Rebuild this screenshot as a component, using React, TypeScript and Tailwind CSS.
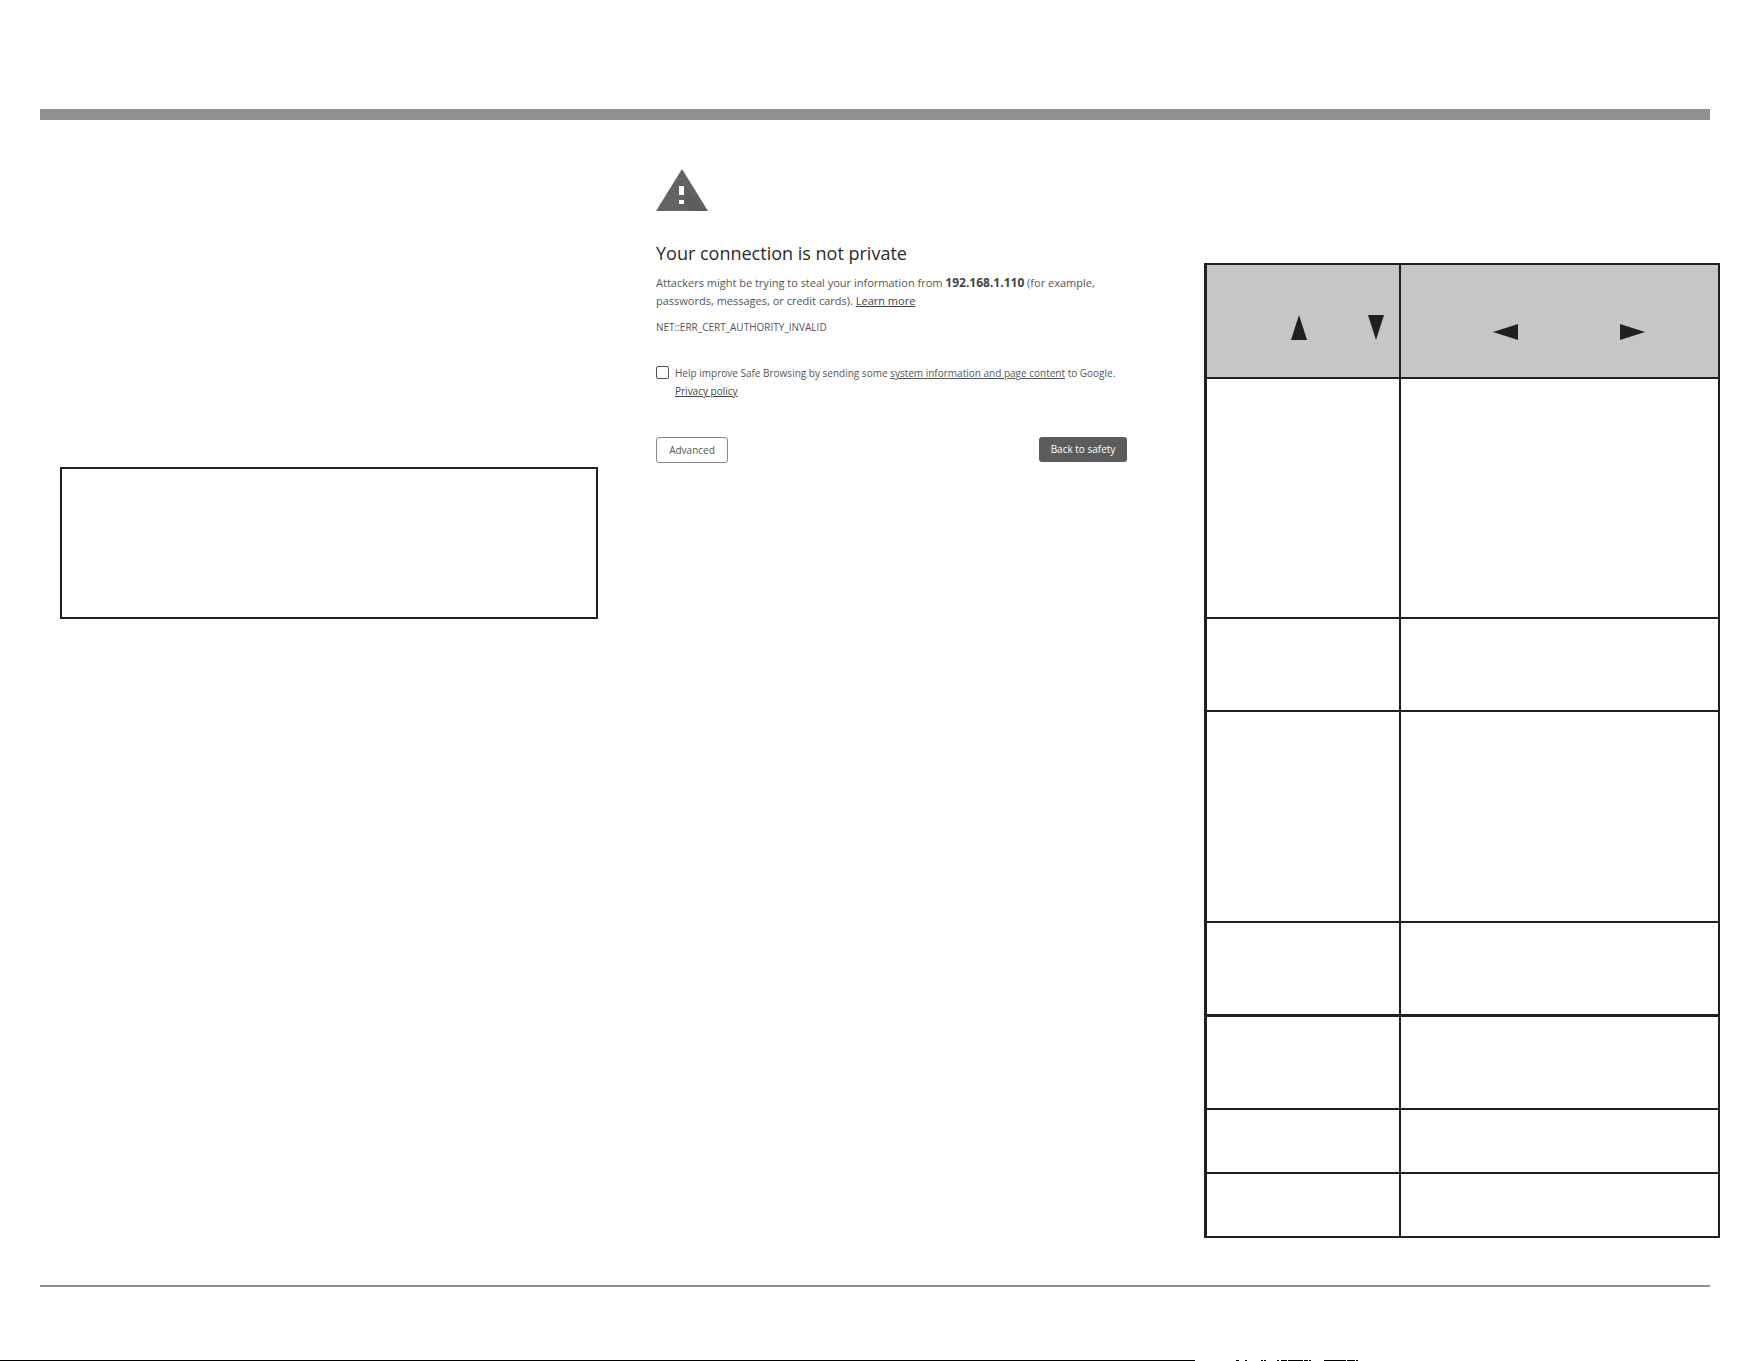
const rows = [
  "h-[240px]",
  "h-[93px]",
  "h-[211px]",
  "h-[94px]",
  "h-[93px]",
  "h-[64px]",
  "h-[64px]",
];

const cutMarks = [
  "ml-[41px] w-[3px]",
  "ml-[6px] w-[2px]",
  "ml-[14px] w-[2px]",
  "ml-px w-[2px]",
  "ml-[11px] w-[2px]",
  "ml-[2px] w-[6px]",
  "ml-px w-[15px]",
  "ml-px w-[4px]",
  "ml-px w-[2px]",
  "ml-[13px] w-[22px]",
  "ml-px w-[8px]",
  "ml-px w-[2px]",
];

function WarningIcon() {
  return (
    <svg width="52" height="42" viewBox="0 0 52 42" aria-hidden="true">
      <path d="M26 0 52 42H0Z" fill="#636363" />
      <path d="M28 18 38 26 48 42H36L23 35V31H28Z" fill="#575757" opacity="0.5" />
      <path d="M23 17h5v9h-5zM23 31h5v4h-5z" fill="#fff" />
    </svg>
  );
}

function Arrow({ w, h, points }: { w: number; h: number; points: string }) {
  return (
    <svg width={w} height={h} viewBox={`0 0 ${w} ${h}`} aria-hidden="true">
      <polygon points={points} fill="#231f20" />
    </svg>
  );
}

function ConnectionWarning() {
  return (
    <section className="mt-[49px] mr-auto ml-[58px] w-[471px] shrink-0 text-[#555]">
      <WarningIcon />
      <h1 className="mt-7 text-lg leading-7 text-[#2b2b2b]">Your connection is not private</h1>
      <p className="mt-[7px] text-[11px] leading-[18px]">
        <span className="block whitespace-nowrap">
          Attackers might be trying to steal your information from{" "}
          <strong className="text-xs leading-none text-[#444]">192.168.1.110</strong> (for example,
        </span>{" "}
        <span className="block whitespace-nowrap">
          passwords, messages, or credit cards).{" "}
          <a href="#" className="text-[#444] underline">
            Learn more
          </a>
        </span>
      </p>
      <p className="mt-2 text-[10px] leading-[18px]">NET::ERR_CERT_AUTHORITY_INVALID</p>
      <div className="mt-7 flex gap-[6px] text-[10px] leading-[18px]">
        <input
          id="reporting"
          type="checkbox"
          className="mt-[2px] size-[13px] shrink-0 appearance-none rounded-[2px] border border-[#555] bg-white checked:bg-[#555]"
        />
        <label htmlFor="reporting">
          <span className="block whitespace-nowrap">
            Help improve Safe Browsing by sending some{" "}
            <a href="#" className="underline">
              system information and page content
            </a>{" "}
            to Google.
          </span>{" "}
          <a href="#" className="text-[#444] underline">
            Privacy policy
          </a>
        </label>
      </div>
      <div className="mt-[37px] flex items-start justify-between text-[10px]">
        <button className="h-[26px] w-[72px] rounded-[3px] border border-[#888] bg-white">
          Advanced
        </button>
        <button className="h-[25px] w-[88px] rounded-[3px] bg-[#5c5c5c] text-white">
          Back to safety
        </button>
      </div>
    </section>
  );
}

function ControlsTable() {
  return (
    <table className="mt-[143px] w-[516px] shrink-0 table-fixed border-separate border-spacing-0 border-t-2 border-l-[3px] border-[#231f20]">
      <colgroup>
        <col className="w-[194px]" />
        <col />
      </colgroup>
      <thead>
        <tr className="h-[114px] bg-[#c6c6c6]">
          <th className="border-r-2 border-b-2 border-[#231f20] p-0 align-top">
            <div className="mt-[50px] mr-[15px] flex justify-end gap-[61px]">
              <Arrow w={16} h={25} points="8,0 16,25 0,25" />
              <Arrow w={16} h={25} points="0,0 16,0 8,25" />
            </div>
          </th>
          <th className="border-r-2 border-b-2 border-[#231f20] p-0 align-top">
            <div className="mt-[59px] mr-[73px] flex justify-end gap-[102px]">
              <Arrow w={25} h={16} points="0,8 25,0 25,16" />
              <Arrow w={25} h={16} points="25,8 0,0 0,16" />
            </div>
          </th>
        </tr>
      </thead>
      <tbody>
        {rows.map((height, i) => (
          <tr key={i} className={height}>
            <td className={`border-r-2 border-[#231f20] p-0 ${i === 3 ? "border-b-[3px]" : "border-b-2"}`} />
            <td className={`border-r-2 border-[#231f20] p-0 ${i === 3 ? "border-b-[3px]" : "border-b-2"}`} />
          </tr>
        ))}
      </tbody>
    </table>
  );
}

export default function App() {
  return (
    <div className="flex min-h-screen flex-col bg-white font-['Open_Sans','Noto_Sans',sans-serif]">
      <header className="mt-[109px] mr-[51px] ml-10 h-[11px] bg-[#918f90]" />
      <main className="mr-[41px] ml-[60px] flex items-start">
        <div className="mt-[347px] h-[152px] w-[538px] shrink-0 border-2 border-[#231f20]" />
        <ConnectionWarning />
        <ControlsTable />
      </main>
      <footer className="mt-[47px] mr-[51px] ml-10 h-[2px] bg-[#918f90]" />
      <div className="mt-auto flex h-px" aria-hidden="true">
        <div className="w-[1195px] bg-black" />
        {cutMarks.map((mark, i) => (
          <div key={i} className={`bg-black ${mark}`} />
        ))}
      </div>
    </div>
  );
}
